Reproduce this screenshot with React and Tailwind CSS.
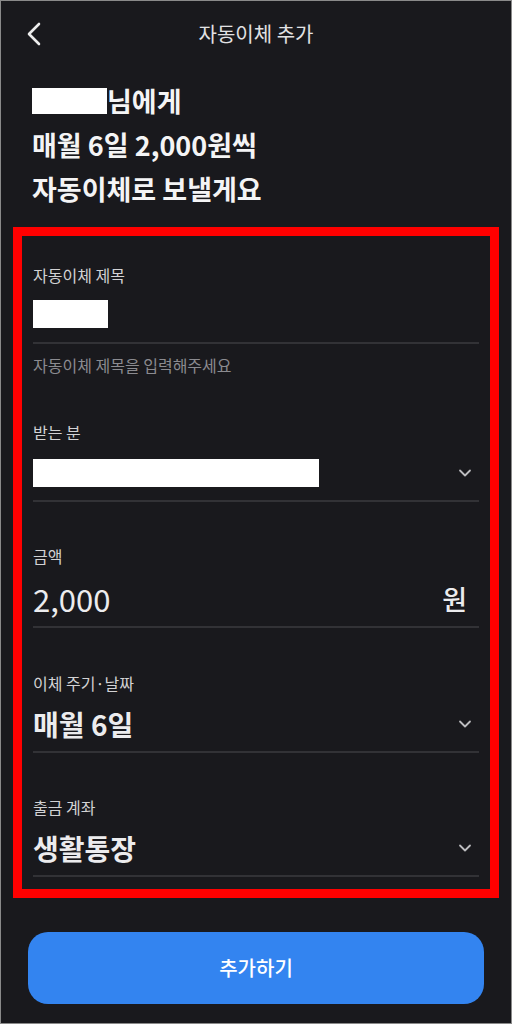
import React from "react";

const Chevron = () => (
  <svg width="14" height="14" viewBox="0 0 14 14" fill="none" className="shrink-0">
    <polyline points="2,4.5 7,9.5 12,4.5" stroke="#bdbdc0" strokeWidth="1.8" strokeLinecap="round" strokeLinejoin="round" />
  </svg>
);

const Line = () => <div className="mt-[5px] h-[2px] bg-[#323236]" />;

export default function App() {
  return (
    <div
      className="w-[512px] h-[1024px] box-border border border-[#8a8a8a] bg-[#19191d] flex flex-col overflow-hidden"
      style={{ fontFamily: '"Noto Sans CJK KR", "Noto Sans", sans-serif' }}
    >
      {/* Header */}
      <div className="relative h-[66px] shrink-0 flex items-center justify-center">
        <svg width="16" height="26" viewBox="0 0 16 26" fill="none" className="absolute left-[25px] top-[20px]">
          <polyline points="13,3 3,13 13,23" stroke="#ececec" strokeWidth="2.6" strokeLinecap="round" strokeLinejoin="round" />
        </svg>
        <span className="text-[20px] text-[#e2e2e4]">자동이체 추가</span>
      </div>

      {/* Headline */}
      <div className="pl-[31px] pt-[12px] text-[27px] leading-[44px] font-semibold text-[#f4f4f5]">
        <div className="flex items-center">
          <span className="inline-block w-[75px] h-[26px] bg-white" />
          <span>님에게</span>
        </div>
        <div>매월 6일 2,000원씩</div>
        <div>자동이체로 보낼게요</div>
      </div>

      {/* Red box */}
      <div className="mt-[16px] mx-[12px] border-[9px] border-[#ff0000] px-[11px] pt-[28px] pb-[12px]">
        {/* Field 1 */}
        <div className="text-[16px] leading-[22px] text-[#d2d2d4]">자동이체 제목</div>
        <div className="mt-[6px] h-[44px] flex items-center">
          <span className="w-[75px] h-[28px] bg-white" />
        </div>
        <div className="mt-[6px] h-[2px] bg-[#323236]" />
        <div className="mt-[10px] text-[16px] leading-[22px] text-[#8b8b90]">자동이체 제목을 입력해주세요</div>

        {/* Field 2 */}
        <div className="mt-[45px] text-[16px] leading-[22px] text-[#d2d2d4]">받는 분</div>
        <div className="mt-[8px] h-[44px] flex items-center justify-between pr-[7px]">
          <span className="w-[286px] h-[28px] bg-white" />
          <Chevron />
        </div>
        <div className="mt-[5px] h-[2px] bg-[#323236]" />

        {/* Field 3 */}
        <div className="mt-[43px] text-[16px] leading-[22px] text-[#d2d2d4]">금액</div>
        <div className="mt-[10px] h-[44px] flex items-center justify-between pr-[12px] text-[31px] text-[#ececee]">
          <span>2,000</span>
          <span className="text-[27px] font-medium">원</span>
        </div>
        <Line />

        {/* Field 4 */}
        <div className="mt-[44px] text-[16px] leading-[22px] text-[#d2d2d4]">이체 주기·날짜</div>
        <div className="mt-[8px] h-[44px] flex items-center justify-between pr-[7px] text-[28px] font-semibold text-[#ececee]">
          <span>매월 6일</span>
          <Chevron />
        </div>
        <Line />

        {/* Field 5 */}
        <div className="mt-[43px] text-[16px] leading-[22px] text-[#d2d2d4]">출금 계좌</div>
        <div className="mt-[8px] h-[44px] flex items-center justify-between pr-[7px] text-[28px] font-semibold text-[#ececee]">
          <span>생활통장</span>
          <Chevron />
        </div>
        <Line />
      </div>

      {/* Button */}
      <div className="mt-[34px] px-[27px]">
        <button className="w-full h-[72px] rounded-[20px] bg-[#3384f0] text-white text-[20px] font-medium flex items-center justify-center">
          추가하기
        </button>
      </div>
    </div>
  );
}
